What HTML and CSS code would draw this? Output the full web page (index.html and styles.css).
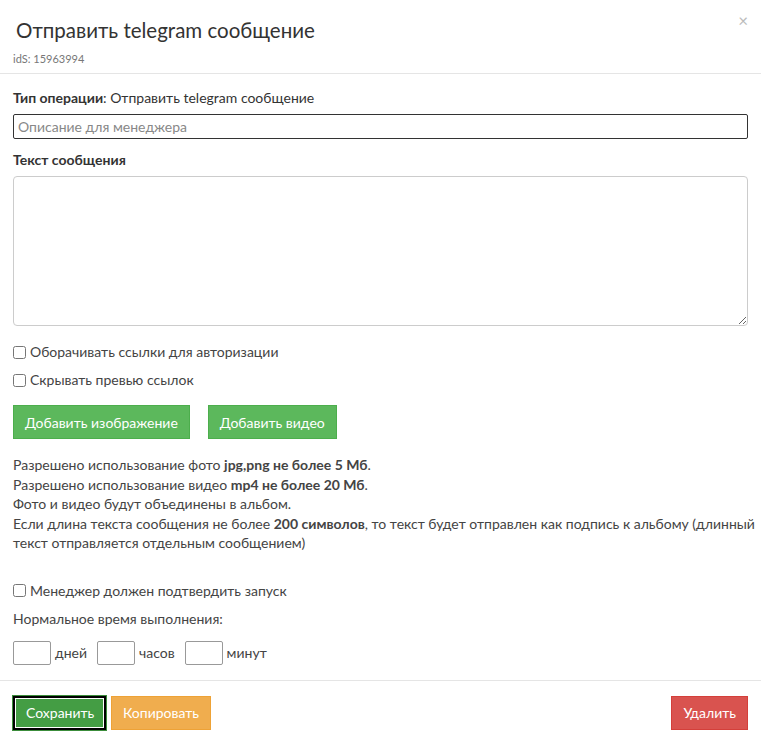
FILE: index.html
```html
<html>
<head>
	<title>Отправить telegram сообщение</title>
	<link rel="stylesheet" href="styles.css">
</head>
<body>
	<div class="modal">
		<div class="modal-header">
			<span class="close">&times;</span>
			<h4 class="modal-title">Отправить telegram сообщение</h4>
			<div class="ids">idS: 15963994</div>
		</div>
		<div class="modal-body">
			<div class="row"><b>Тип операции</b>: Отправить telegram сообщение</div>
			<input type="text" class="form-control dark" placeholder="Описание для менеджера">
			<div class="label"><b>Текст сообщения</b></div>
			<textarea class="form-control area"></textarea>
			<label class="check"><input type="checkbox"> Оборачивать ссылки для авторизации</label>
			<label class="check"><input type="checkbox"> Скрывать превью ссылок</label>
			<div class="btns">
				<button class="btn btn-success">Добавить изображение</button>
				<button class="btn btn-success">Добавить видео</button>
			</div>
			<div class="info">
				Разрешено использование фото <b>jpg,png не более 5 Мб</b>.<br>
				Разрешено использование видео <b>mp4 не более 20 Мб</b>.<br>
				Фото и видео будут объединены в альбом.<br>
				Если длина текста сообщения не более <b>200 символов</b>, то текст будет отправлен как подпись к альбому (длинный текст отправляется отдельным сообщением)
			</div>
			<label class="check confirm"><input type="checkbox"> Менеджер должен подтвердить запуск</label>
			<div class="time-label">Нормальное время выполнения:</div>
			<div class="time">
				<input type="text" class="small"> <span>дней</span>
				<input type="text" class="small"> <span>часов</span>
				<input type="text" class="small"> <span>минут</span>
			</div>
		</div>
		<div class="modal-footer">
			<button class="btn btn-save">Сохранить</button>
			<button class="btn btn-warning">Копировать</button>
			<button class="btn btn-danger right">Удалить</button>
		</div>
	</div>
</body>
</html>
```
FILE: styles.css
```css
* {
	box-sizing: border-box;
}

body{
	margin: 0;
	background: #fff;
	font-family: "Lato", "Liberation Sans", sans-serif;
	font-size: 14px;
	color: #333;
}

.modal-header{
	position: relative;
	padding: 16px 16px 6px 16px;
	border-bottom: 1px solid #e5e5e5;
}

.modal-title{
	margin: 0;
	font-size: 20.5px;
	font-weight: normal;
	line-height: 28px;
	color: #333;
}

.ids{
	margin-top: 7px;
	margin-left: -3px;
	font-size: 11px;
	color: #777;
	line-height: 16px;
}

.close{
	position: absolute;
	right: 13px;
	top: 12px;
	font-size: 17px;
	color: #bbb;
	line-height: 1;
}

.modal-body{
	padding: 14px 13px 15px 13px;
}

.row{
	line-height: 20px;
	margin-bottom: 6px;
}

.form-control{
	display: block;
	width: 100%;
	font-family: inherit;
	font-size: 14px;
	color: #555;
}

.dark{
	height: 25px;
	border: 1px solid #333;
	border-radius: 2px;
	padding: 2px 4px;
}

.dark::placeholder{
	color: #888;
}

.label{
	margin-top: 11px;
	line-height: 20px;
	margin-bottom: 6px;
}

.area{
	height: 150px;
	border: 1px solid #ccc;
	border-radius: 4px;
	margin-bottom: 16px;
}

.check{
	display: flex;
	align-items: center;
	line-height: 20px;
	margin-bottom: 8px;
	color: #444;
}

.check input{
	margin: 0 4px 0 0;
	width: 13px;
	height: 13px;
}

.btns{
	margin-top: 15px;
	display: flex;
	gap: 18px;
}

.btn{
	font-family: inherit;
	font-size: 14px;
	color: #fff;
	height: 34px;
	padding: 0 11px;
	border: 1px solid transparent;
	border-radius: 0;
}

.btn-success{
	background: #5cb85c;
	border-color: #4cae4c;
}

.info{
	margin-top: 16px;
	margin-right: -12px;
	line-height: 19.5px;
	color: #444;
}

.confirm{
	margin-top: 28px;
}

.time-label{
	margin-top: 5px;
	line-height: 20px;
	color: #444;
}

.time{
	margin-top: 12px;
	display: flex;
	align-items: center;
	color: #444;
}

.small{
	width: 38px;
	height: 24px;
	border: 1px solid #999;
	border-radius: 2px;
	margin-right: 4px;
}

.time span{
	margin-right: 10px;
}

.modal-footer{
	border-top: 1px solid #e5e5e5;
	padding: 15px 13px;
	display: flex;
	gap: 5px;
}

.btn-save{
	background: #449d44;
	border: 2px solid #000;
	outline: 1px solid #3c8d3c;
	box-shadow: inset 0 0 0 1px #fff;
	width: 93px;
}

.btn-warning{
	background: #f0ad4e;
	border-color: #eea236;
}

.btn-danger{
	background: #d9534f;
	border-color: #d43f3a;
}

.right{
	margin-left: auto;
}
```
